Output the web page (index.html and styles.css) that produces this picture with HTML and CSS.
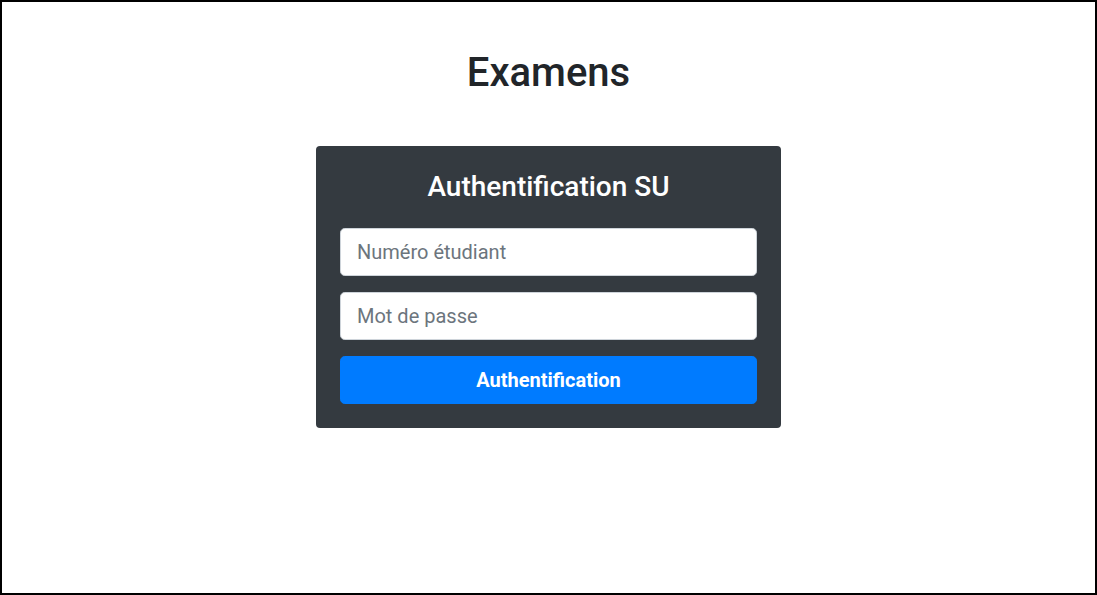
FILE: index.html
```html
<!DOCTYPE html>
<html lang="fr">
<head>
<meta charset="utf-8">
<title>Examens</title>
<link rel="stylesheet" href="styles.css">
</head>
<body>
<div class="frame">
  <h1 class="page-title">Examens</h1>
  <form class="card">
    <h3 class="card-title">Authentification SU</h3>
    <input class="field" type="text" placeholder="Numéro étudiant">
    <input class="field" type="password" placeholder="Mot de passe">
    <button class="btn" type="button">Authentification</button>
  </form>
</div>
</body>
</html>
```

FILE: styles.css
```css
html, body {
  margin: 0;
  padding: 0;
}
body {
  font-family: Roboto, "Liberation Sans", sans-serif;
  color: #212529;
  background: #fff;
}
.frame {
  box-sizing: border-box;
  width: 1097px;
  height: 595px;
  border: 2px solid #000;
  display: flex;
  flex-direction: column;
  align-items: center;
}
.page-title {
  margin: 47px 0 0;
  font-size: 40px;
  font-weight: 500;
  line-height: 48px;
}
.card {
  box-sizing: border-box;
  margin-top: 49px;
  width: 465px;
  background: #343a40;
  border-radius: 4px;
  padding: 24px;
  display: flex;
  flex-direction: column;
  gap: 16px;
}
.card-title {
  margin: 0 0 8px;
  color: #fff;
  text-align: center;
  font-size: 28px;
  font-weight: 500;
  line-height: 34px;
}
.field {
  box-sizing: border-box;
  height: 48px;
  width: 100%;
  margin: 0;
  padding: 0 16px;
  border: 1px solid #ced4da;
  border-radius: 4.8px;
  background: #fff;
  font-family: inherit;
  font-size: 20px;
  color: #495057;
}
.field::placeholder {
  color: #6c757d;
  opacity: 1;
}
.btn {
  height: 48px;
  width: 100%;
  margin: 0;
  border: 1px solid #007bff;
  border-radius: 4.8px;
  background: #007bff;
  color: #fff;
  font-family: inherit;
  font-size: 20px;
  font-weight: 700;
}
```
